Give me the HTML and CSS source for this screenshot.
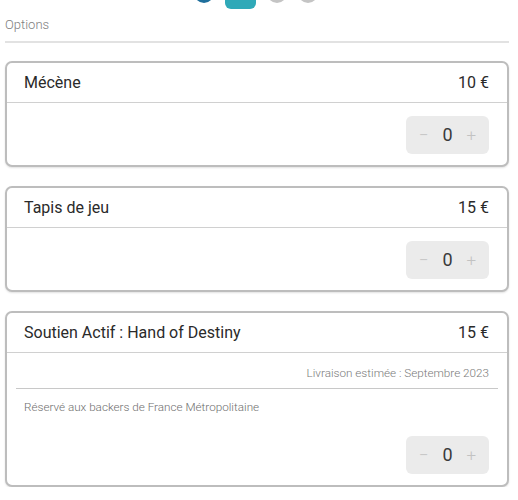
FILE: index.html
```html
<!DOCTYPE html>
<html lang="fr">
<head>
<meta charset="utf-8">
<link rel="stylesheet" href="styles.css">
</head>
<body>
<div class="page">
  <div class="steps">
    <span class="step step-done"></span>
    <span class="step step-current"></span>
    <span class="step step-todo"></span>
    <span class="step step-todo"></span>
  </div>
  <div class="section-title">Options</div>
  <div class="cards">
    <div class="card">
      <div class="card-head">
        <span class="card-title">Mécène</span>
        <span class="card-price">10 €</span>
      </div>
      <div class="card-body">
        <div class="counter"><span class="btn">−</span><span class="qty">0</span><span class="btn">+</span></div>
      </div>
    </div>
    <div class="card">
      <div class="card-head">
        <span class="card-title">Tapis de jeu</span>
        <span class="card-price">15 €</span>
      </div>
      <div class="card-body">
        <div class="counter"><span class="btn">−</span><span class="qty">0</span><span class="btn">+</span></div>
      </div>
    </div>
    <div class="card">
      <div class="card-head">
        <span class="card-title">Soutien Actif : Hand of Destiny</span>
        <span class="card-price">15 €</span>
      </div>
      <div class="card-info">
        <div class="delivery">Livraison estimée : Septembre 2023</div>
        <div class="note">Réservé aux backers de France Métropolitaine</div>
      </div>
      <div class="card-body">
        <div class="counter"><span class="btn">−</span><span class="qty">0</span><span class="btn">+</span></div>
      </div>
    </div>
  </div>
</div>
</body>
</html>
```
FILE: styles.css
```css
* { box-sizing: border-box; }
html, body { margin: 0; padding: 0; background: #fff; }
body { font-family: Roboto, "Noto Sans", Arial, sans-serif; color: #2b2b2b; }
.page { padding: 0 9px 0 5px; }
.steps {
  display: flex;
  justify-content: center;
  align-items: flex-end;
  gap: 11px;
  height: 9px;
  overflow: hidden;
  padding-right: 3px;
}
.step { display: block; width: 20px; height: 20px; border-radius: 10px; flex: none; }
.step-done { background: #1f6f9c; margin-bottom: 6px; }
.step-current { background: #2fa9b8; width: 31px; height: 24px; border-radius: 6px; }
.step-todo { background: #c4c4c4; margin-bottom: 6px; }
.section-title {
  font-size: 13px;
  font-weight: 300;
  color: #7e7e7e;
  padding: 8px 0 9px;
  line-height: 15px;
  border-bottom: 2px solid #e2e2e2;
}
.cards { display: flex; flex-direction: column; gap: 19px; padding-top: 18px; }
.card {
  border: 2px solid #bdbdbd;
  border-radius: 7px;
  box-shadow: 0 1px 2px rgba(0,0,0,0.12);
  background: #fff;
}
.card-head {
  display: flex;
  justify-content: space-between;
  align-items: center;
  height: 40px;
  padding: 0 18px 0 17px;
  border-bottom: 1px solid #d0d0d0;
  font-size: 16px;
  color: #2a2a2a;
}
.card-body {
  display: flex;
  justify-content: flex-end;
  padding: 13px 18px 11px;
}
.counter {
  display: flex;
  align-items: center;
  justify-content: space-between;
  width: 83px;
  height: 38px;
  background: #ebebeb;
  border-radius: 6px;
  padding: 0 13px 0 13px;
}
.btn { color: #c2c2c2; font-size: 17px; line-height: 1; font-weight: 300; }
.qty { color: #3a3a3a; font-size: 18px; line-height: 1; }
.card-info { padding: 0 9px 0 9px; }
.delivery {
  text-align: right;
  font-size: 11.7px;
  font-weight: 300;
  color: #7a7a7a;
  padding: 13px 9px 8px;
  border-bottom: 1px solid #c8c8c8;
  line-height: 14px;
}
.note {
  font-size: 11.7px;
  font-weight: 300;
  color: #6e6e6e;
  padding: 11px 8px 0;
  line-height: 14px;
}
.card-info + .card-body { padding-top: 22px; }
```
